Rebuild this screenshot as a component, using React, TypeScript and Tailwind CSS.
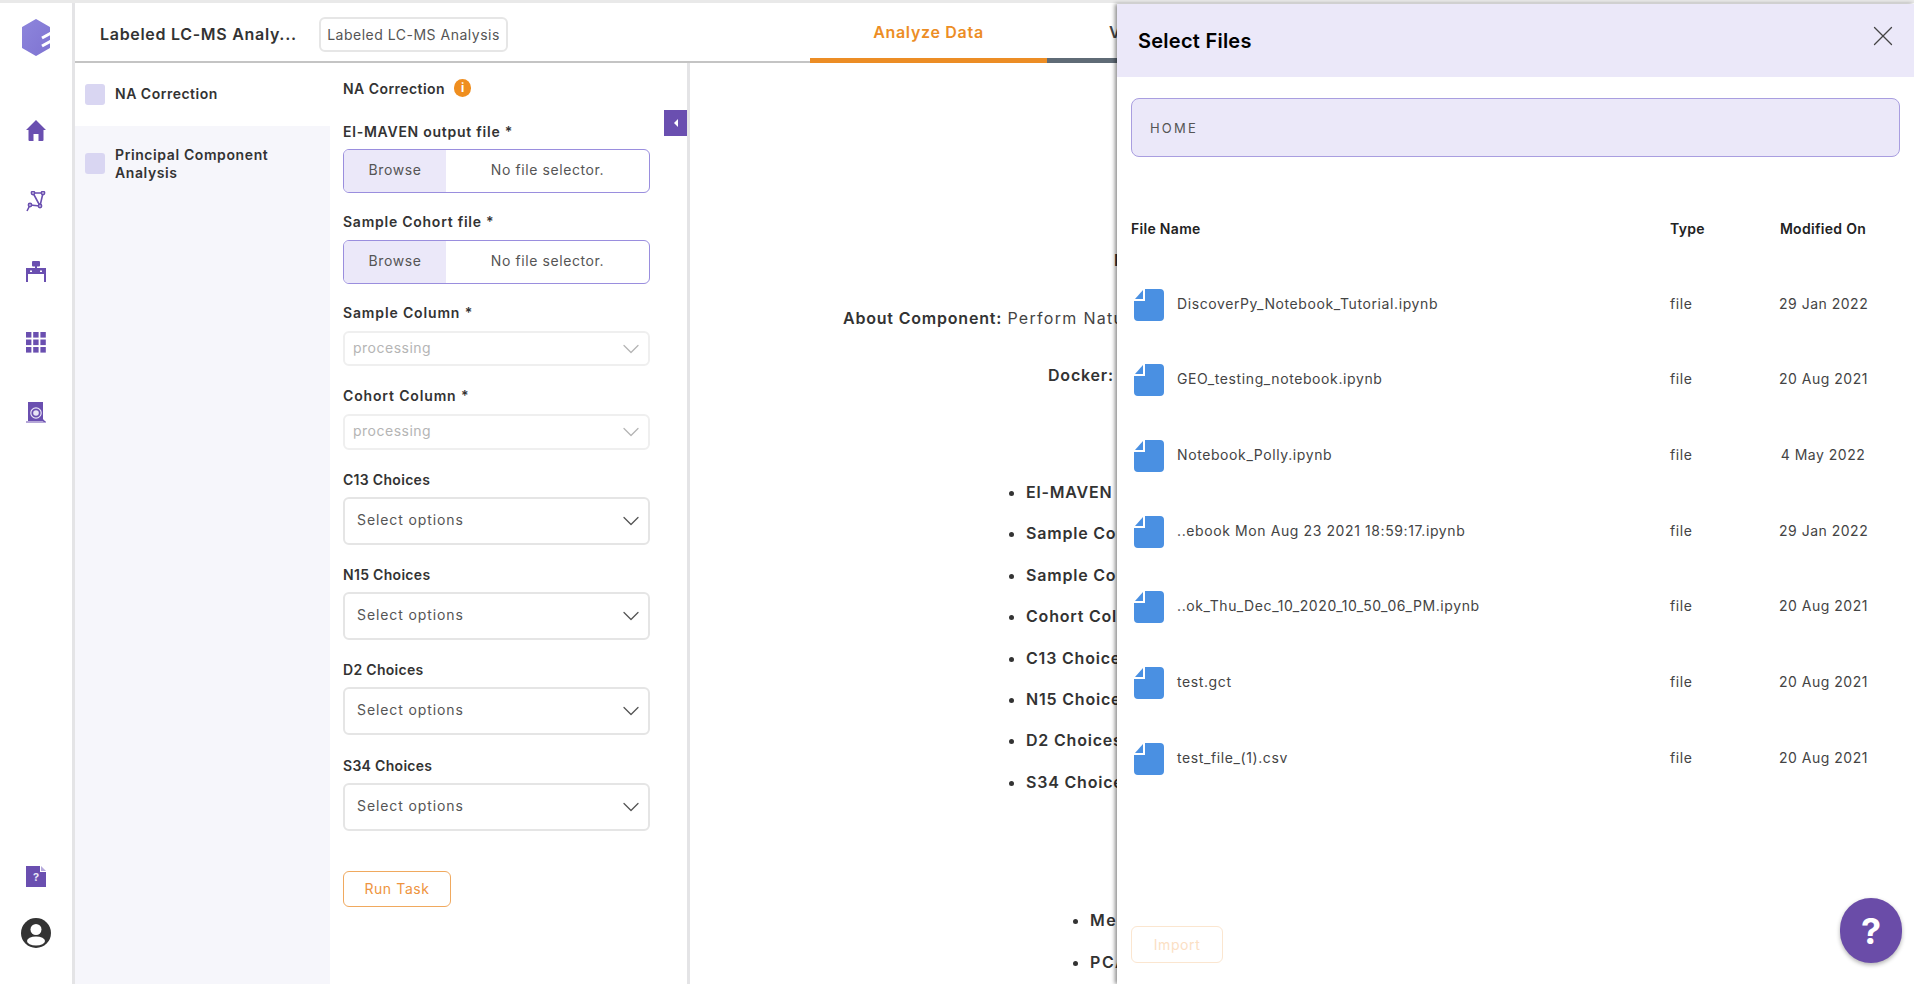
import { ChevronDown, X } from "lucide-react";

const Logo = () => (
  <svg width="30" height="37" viewBox="0 0 30 37" className="mt-[19px]">
    <defs>
      <linearGradient id="logoFill" x1="0" y1="0" x2="1" y2="1">
        <stop offset="0" stopColor="#8d85dc" />
        <stop offset="1" stopColor="#7f74d2" />
      </linearGradient>
    </defs>
    <path d="M15 1 L28 8.5 V28.5 L15 36 L2 28.5 V8.5 Z" fill="url(#logoFill)" stroke="url(#logoFill)" strokeWidth="2" strokeLinejoin="round" />
    <path d="M21 19 L30 14 M21 27 L30 22" stroke="#fff" strokeWidth="3" />
  </svg>
);

const HomeIcon = () => (
  <svg width="20" height="21" viewBox="0 0 20 21" fill="#6a4fb0">
    <path d="M10 0 L20 10 L17.5 10 V20 Q17.5 21 16.5 21 H12.5 V14 H7.5 V21 H3.5 Q2.5 21 2.5 20 V10 H0 Z" />
  </svg>
);

const NetworkIcon = () => (
  <svg width="20" height="21" viewBox="0 0 20 21" fill="none" stroke="#6a4fb0" strokeWidth="1.6">
    <path d="M7 2 L17 2 L14 15 Z M4 14 L14 15 M4 14 L1 20" />
    <circle cx="7" cy="2" r="1.6" fill="#fff" />
    <circle cx="17" cy="2" r="1.6" fill="#fff" />
    <circle cx="14" cy="15" r="1.6" fill="#fff" />
    <circle cx="4" cy="14" r="1.6" fill="#fff" />
  </svg>
);

const DeskIcon = () => (
  <svg width="20" height="21" viewBox="0 0 20 21" fill="#6a4fb0">
    <rect x="6" y="0" width="8" height="5.5" rx="1" />
    <rect x="9" y="5" width="2" height="2" />
    <rect x="0" y="7" width="20" height="6" />
    <rect x="0" y="13" width="2" height="8" />
    <rect x="18" y="13" width="2" height="8" />
    <rect x="4" y="9.5" width="2" height="1.5" fill="#fff" />
    <rect x="14" y="9.5" width="2" height="1.5" fill="#fff" />
  </svg>
);

const GridIcon = () => (
  <svg width="20" height="21" viewBox="0 0 20 21" fill="#6a4fb0">
    {[0, 7.5, 15].map((y) =>
      [0, 7.2, 14.4].map((x) => <rect key={`${x}-${y}`} x={x} y={y} width="5.4" height="5.6" />)
    )}
  </svg>
);

const NotebookIcon = () => (
  <svg width="20" height="21" viewBox="0 0 20 21">
    <rect x="2" y="0" width="15" height="19" fill="#6a4fb0" />
    <circle cx="10" cy="11" r="5.2" fill="#6a4fb0" stroke="#e9e6f6" strokeWidth="1.2" />
    <circle cx="10" cy="11" r="2.8" fill="#e9e6f6" />
    <path d="M0 20 H20 M14 15 L19 20" stroke="#6a4fb0" strokeWidth="1.2" />
  </svg>
);

const HelpDocIcon = () => (
  <svg width="20" height="21" viewBox="0 0 20 21">
    <path d="M0 0 H14 V6 H20 V21 H0 Z" fill="#6a4fb0" />
    <path d="M15 0 L20 5 H15 Z" fill="#b5a8dc" />
    <text x="10" y="15" textAnchor="middle" fontSize="11" fontWeight="700" fill="#e8e4f6">?</text>
  </svg>
);

const UserIcon = () => (
  <svg width="30" height="30" viewBox="0 0 30 30">
    <circle cx="15" cy="15" r="15" fill="#333" />
    <circle cx="15" cy="11.5" r="5.5" fill="#fff" />
    <ellipse cx="15" cy="23" rx="9" ry="4.5" fill="#fff" />
  </svg>
);

const FileIcon = () => (
  <svg width="30" height="32" viewBox="0 0 30 32" fill="#4a90e2" className="shrink-0">
    <path d="M11 0 H26 Q30 0 30 4 V28 Q30 32 26 32 H4 Q0 32 0 28 V12 H11 Z" />
    <path d="M9 1 V10 H1 Z" />
  </svg>
);

const FileBox = ({ className }: { className: string }) => (
  <div className={`flex h-[44px] overflow-hidden rounded-md border border-[#9a8ede] text-[14px] tracking-[0.6px] text-[#555] ${className}`}>
    <div className="flex w-[102px] items-center justify-center bg-[#ebe8f9] pb-[3px]">Browse</div>
    <div className="flex flex-1 items-center justify-center pb-[3px]">No file selector.</div>
  </div>
);

const Dropdown = ({ text, className }: { text: string; className: string }) => (
  <div className={`flex items-center justify-between rounded-md border-2 pr-[3px] text-[14px] ${className}`}>
    <span className="pb-[3px]">{text}</span>
    <ChevronDown size={28} strokeWidth={1.1} />
  </div>
);

const disabledSelect = "border-[#efefef] pl-[8px] tracking-[0.5px] text-[#b5b5b5]";
const optionSelect = "mt-[7px] h-[48px] border-[#e5e5e5] pl-[12px] tracking-[0.9px] text-[#555]";

const Label = ({ text, className }: { text: string; className: string }) => (
  <div className={`h-5 text-[14px] font-semibold leading-5 text-[#333] ${className}`}>{text}</div>
);

const files = [
  { name: "DiscoverPy_Notebook_Tutorial.ipynb", date: "29 Jan 2022" },
  { name: "GEO_testing_notebook.ipynb", date: "20 Aug 2021" },
  { name: "Notebook_Polly.ipynb", date: "4 May 2022" },
  { name: "..ebook Mon Aug 23 2021 18:59:17.ipynb", date: "29 Jan 2022" },
  { name: "..ok_Thu_Dec_10_2020_10_50_06_PM.ipynb", date: "20 Aug 2021" },
  { name: "test.gct", date: "20 Aug 2021" },
  { name: "test_file_(1).csv", date: "20 Aug 2021" },
];

const inputs = [
  "El-MAVEN output file",
  "Sample Cohort file",
  "Sample Column",
  "Cohort Column",
  "C13 Choices",
  "N15 Choices",
  "D2 Choices",
  "S34 Choices",
];

export default function App() {
  return (
    <div className="relative flex h-screen w-full flex-col overflow-hidden bg-white font-['Inter',sans-serif] text-[#333]">
      <div className="h-[3px] shrink-0 bg-[#e9e9e9]" />
      <div className="flex min-h-0 flex-1">
        <aside className="flex w-[75px] shrink-0 flex-col items-center border-r-[3px] border-[#e4e4e6] pb-[36px]">
          <div className="-mt-[3px] flex flex-col items-center">
            <Logo />
            <div className="mt-[64px] flex flex-col items-center gap-[49.5px]">
              <HomeIcon />
              <NetworkIcon />
              <DeskIcon />
              <GridIcon />
              <NotebookIcon />
            </div>
          </div>
          <div className="mt-auto flex flex-col items-center gap-[31px]">
            <HelpDocIcon />
            <UserIcon />
          </div>
        </aside>

        <div className="flex min-w-0 flex-1 flex-col">
          <header className="flex h-[60px] shrink-0 border-b-2 border-[#c4c4c4]">
            <div className="ml-[25px] flex w-[219px] items-center pt-[3px] text-[16px] font-semibold tracking-[0.7px] text-[#333]">Labeled LC-MS Analy...</div>
            <div className="mt-[14px] flex h-[35px] w-[189px] items-center justify-center rounded-md border-2 border-[#e6e6e6] text-[14px] tracking-[0.5px] text-[#555]">
              Labeled LC-MS Analysis
            </div>
            <div className="-mb-[2px] ml-[302px] flex w-[237px] items-center justify-center border-b-[5px] border-[#ec8d25] pt-[3px] text-[16px] font-semibold tracking-[0.7px] text-[#ec8d25]">
              Analyze Data
            </div>
            <div className="-mb-[2px] flex flex-1 items-center border-b-[5px] border-[#5f6b76] pl-[62px] pt-[3px] text-[16px] font-semibold text-[#444]">
              View Results
            </div>
          </header>

          <div className="flex min-h-0 flex-1">
            <nav className="flex w-[255px] shrink-0 flex-col bg-[#f6f6fb]">
              <div className="flex h-[63px] items-start gap-[10px] bg-white pl-[10px] pt-[21px]">
                <div className="h-[21px] w-[20px] shrink-0 rounded-[3px] bg-[#d9d6f2]" />
                <span className="-mt-[1px] text-[14px] font-semibold leading-[21px] tracking-[0.5px] text-[#333]">NA Correction</span>
              </div>
              <div className="mt-[20px] flex items-center gap-[10px] pl-[10px]">
                <div className="h-[21px] w-[20px] shrink-0 rounded-[3px] bg-[#d9d6f2]" />
                <span className="text-[14px] font-semibold leading-[17.5px] tracking-[0.6px] text-[#333]">
                  Principal Component
                  <br />
                  Analysis
                </span>
              </div>
            </nav>

            <section className="relative w-[360px] shrink-0 border-r-[3px] border-[#e4e4e6] pl-[13px] pr-[37px] pt-[15px]">
              <div className="flex h-5 items-center gap-[9px]">
                <span className="text-[14px] font-semibold tracking-[0.45px] text-[#333]">NA Correction</span>
                <span className="flex h-[18px] w-[17px] items-center justify-center rounded-full bg-[#ef8e1f] text-[12px] font-bold text-white">i</span>
              </div>
              <Label text="El-MAVEN output file *" className="mt-[24px] tracking-[0.75px]" />
              <FileBox className="mt-[7px]" />
              <Label text="Sample Cohort file *" className="mt-[19px] tracking-[0.75px]" />
              <FileBox className="mt-[8px]" />
              <Label text="Sample Column *" className="mt-[19px] tracking-[0.85px]" />
              <Dropdown text="processing" className={`mt-[8px] h-[35px] ${disabledSelect}`} />
              <Label text="Cohort Column *" className="mt-[20px] tracking-[0.85px]" />
              <Dropdown text="processing" className={`mt-[8px] h-[36px] ${disabledSelect}`} />
              <Label text="C13 Choices" className="mt-[20px] tracking-[0.3px]" />
              <Dropdown text="Select options" className={optionSelect} />
              <Label text="N15 Choices" className="mt-[20px] tracking-[0.3px]" />
              <Dropdown text="Select options" className={optionSelect} />
              <Label text="D2 Choices" className="mt-[20px] tracking-[0.3px]" />
              <Dropdown text="Select options" className={optionSelect} />
              <Label text="S34 Choices" className="mt-[21px] tracking-[0.3px]" />
              <Dropdown text="Select options" className={optionSelect} />
              <button className="mt-[40px] flex h-[36px] w-[108px] items-center justify-center rounded-md border border-[#f0a95f] pb-[2px] text-[14px] tracking-[0.6px] text-[#ee9440]">
                Run Task
              </button>
              <div className="absolute right-0 top-[47px] flex h-[26px] w-[23px] items-center justify-center bg-[#6a4fb0]">
                <div className="h-0 w-0 border-y-[4px] border-r-[4px] border-y-transparent border-r-white" />
              </div>
            </section>

            <main className="min-w-0 flex-1 overflow-hidden whitespace-nowrap text-[16px] leading-6 tracking-[0.8px] text-[#444]">
              <p className="pl-[424px] pt-[185px] font-semibold text-[#333]">NA Correction</p>
              <p className="mt-[34px] pl-[153px]">
                <span className="font-semibold text-[#333]">About Component:</span>{" "}
                <span className="tracking-[1.3px]">Perform Natural Abundance correction</span>
              </p>
              <p className="mt-[33px] pl-[358px]">
                <span className="font-semibold text-[#333]">Docker:</span> docker
              </p>
              <ul className="mt-[93px] flex list-disc flex-col gap-[17.4px] pl-[336px] font-semibold text-[#333]">
                {inputs.map((item) => (
                  <li key={item}>{item}</li>
                ))}
              </ul>
              <ul className="mt-[114px] flex list-disc flex-col gap-[18px] pl-[400px] font-semibold tracking-[1.6px] text-[#333]">
                <li>Metabolite</li>
                <li>PCA</li>
              </ul>
            </main>
          </div>
        </div>
      </div>

      {/* file drawer */}
      <div className="absolute bottom-0 right-0 top-[4px] flex w-[797px] flex-col bg-white shadow-[-2px_0_4px_rgba(0,0,0,0.45)]">
        <div className="flex h-[73px] shrink-0 items-center justify-between bg-[#ebe8f9] pl-[21px] pr-[14px]">
          <span className="text-[20px] font-semibold tracking-[0.25px] text-black">Select Files</span>
          <X size={34} strokeWidth={0.9} className="-mt-[9px] text-[#444]" />
        </div>
        <div className="mx-[14px] mt-[21px] flex h-[59px] shrink-0 items-center rounded-lg border border-[#a99ee0] bg-[#ebe8f9] pl-[18px] pt-[2px] text-[13px] tracking-[2.2px] text-[#555]">
          HOME
        </div>
        <div className="ml-[14px] mt-[62px] grid h-5 grid-cols-[539px_109px_88px] text-[14px] font-semibold leading-5 tracking-[0.3px] text-[#222]">
          <span>File Name</span>
          <span>Type</span>
          <span className="whitespace-nowrap text-center">Modified On</span>
        </div>
        <div className="ml-[14px] mt-[28px] flex flex-col">
          {files.map((f) => (
            <div key={f.name} className="grid h-[75.67px] grid-cols-[539px_109px_88px] items-center text-[14px] tracking-[0.6px] text-[#444]">
              <div className="flex items-center gap-[13px] pl-[3px]">
                <FileIcon />
                <span className="-mt-[3px]">{f.name}</span>
              </div>
              <span className="-mt-[3px]">file</span>
              <span className="-mt-[3px] whitespace-nowrap text-center tracking-[0.5px]">{f.date}</span>
            </div>
          ))}
        </div>
        <button className="mb-[21px] ml-[14px] mt-auto flex h-[37px] w-[92px] items-center justify-center rounded-md border border-[#fbe6d0] text-[14px] tracking-[0.6px] text-[#fbe0c4]">
          Import
        </button>
      </div>

      <div className="absolute bottom-[21px] right-[12px] flex h-[65px] w-[62px] items-center justify-center rounded-full bg-[#6a4ca8] text-[36px] font-bold text-white shadow-[0_2px_4px_rgba(0,0,0,0.3)]">
        ?
      </div>
    </div>
  );
}
